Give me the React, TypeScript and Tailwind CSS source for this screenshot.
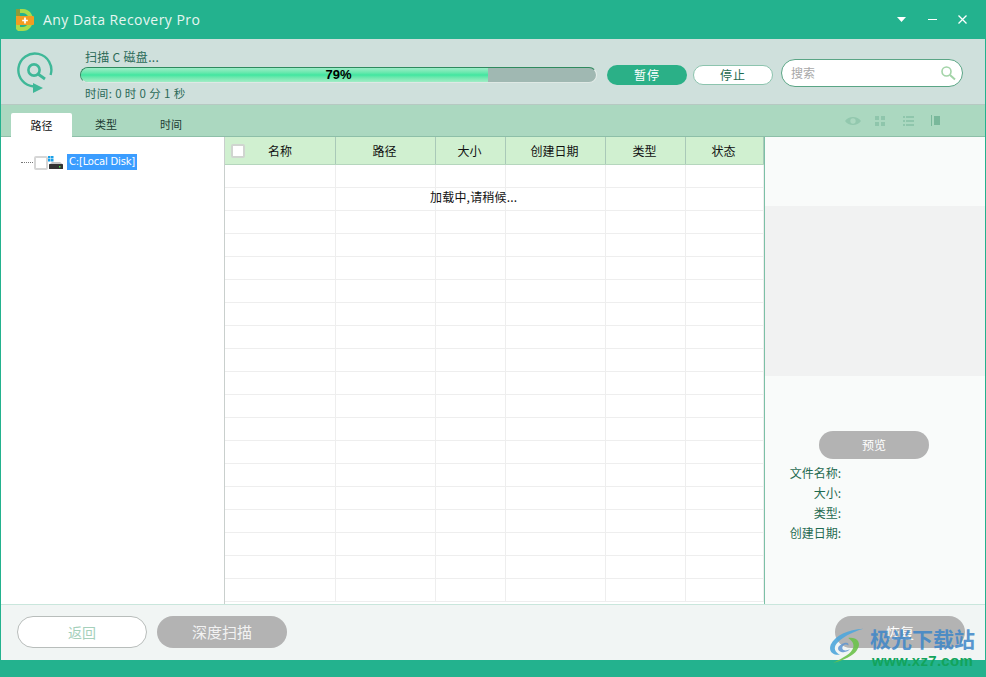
import React from "react";

const font = { fontFamily: '"Noto Sans CJK SC", "Liberation Sans", sans-serif' };
const cols = [
  { w: "w-[111px]", t: "名称", check: true },
  { w: "w-[100px]", t: "路径" },
  { w: "w-[70px]", t: "大小" },
  { w: "w-[100px]", t: "创建日期" },
  { w: "w-[80px]", t: "类型" },
  { w: "w-[78px]", t: "状态" },
];
const rows = Array.from({ length: 19 });

function Logo() {
  return (
    <svg width="20" height="24" viewBox="0 0 20 24" className="shrink-0">
      <path d="M1 1 H8 C14 1 18 6 18 12 C18 18 14 23 8 23 H3 L1 21 Z M5 5 V19 H8 C11 19 14 16 14 12 C14 8 11 5 8 5 Z" fill="#a9dc4c" fillRule="evenodd" />
      <path d="M1 1 H5 V8 H1 Z" fill="#8a9c3a" />
      <rect x="1" y="8" width="18" height="9" rx="1" fill="#f39c21" />
      <path d="M10 9.6 V15.4 M7.2 12.5 H12.8" stroke="#fff" strokeWidth="1.7" />
    </svg>
  );
}

function ScanIcon() {
  return (
    <svg width="38" height="41" viewBox="0 0 38 41" className="shrink-0">
      <path d="M33.6 23 A16.5 16.5 0 1 0 17 34.5" fill="none" stroke="#3fb898" strokeWidth="2.4" />
      <path d="M16 31 L26 36 L16 41 Z" fill="#3fb898" />
      <circle cx="17" cy="18" r="5.6" fill="none" stroke="#3fb898" strokeWidth="2.6" />
      <path d="M21 22 L28 27" stroke="#3fb898" strokeWidth="2.8" />
    </svg>
  );
}

function Toolbar() {
  return (
    <div className="flex items-center mr-[45px]">
      <svg width="16" height="12" viewBox="0 0 18 12"><path d="M0 6 C4 0 14 0 18 6 C14 12 4 12 0 6 Z M9 3 A3 3 0 1 0 9 9 A3 3 0 1 0 9 3 Z" fill="#92c8ae" fillRule="evenodd" /></svg>
      <svg width="10" height="10" viewBox="0 0 10 10" className="ml-[14px]" fill="#8fc6ac"><rect width="4" height="4" /><rect x="6" width="4" height="4" /><rect y="6" width="4" height="4" /><rect x="6" y="6" width="4" height="4" /></svg>
      <svg width="11" height="10" viewBox="0 0 11 10" className="ml-[18px]" fill="#8fc6ac"><rect width="2" height="2" /><rect x="3" width="8" height="2" /><rect y="4" width="2" height="2" /><rect x="3" y="4" width="8" height="2" /><rect y="8" width="2" height="2" /><rect x="3" y="8" width="8" height="2" /></svg>
      <svg width="9" height="11" viewBox="0 0 9 11" className="ml-[17px]" fill="#79b89b"><rect width="1" height="11" /><rect x="3" y="1" width="6" height="9" /></svg>
    </div>
  );
}

export default function App() {
  return (
    <div className="w-[986px] h-[677px] flex flex-col overflow-hidden bg-[#23b28e] relative" style={font}>
      {/* title bar */}
      <div className="h-[39px] shrink-0 flex items-center pl-[15px] pr-[19px] text-white">
        <Logo />
        <span className="ml-[8px] text-[14px] tracking-[0.45px] text-[#e6f6f1]" style={{ fontFamily: '"Open Sans", sans-serif' }}>Any Data Recovery Pro</span>
        <div className="ml-auto flex items-center">
          <svg width="9" height="5" viewBox="0 0 9 5" className="mr-[22px]"><path d="M0 0 H9 L4.5 5 Z" fill="#fff" /></svg>
          <svg width="9" height="2" viewBox="0 0 9 2" className="mr-[21px]"><rect width="9" height="1" fill="#fff" /></svg>
          <svg width="9" height="9" viewBox="0 0 9 9"><path d="M0.5 0.5 L8.5 8.5 M8.5 0.5 L0.5 8.5" stroke="#fff" strokeWidth="1.3" /></svg>
        </div>
      </div>

      {/* scan panel */}
      <div className="h-[66px] shrink-0 mx-px bg-[#cfe0dc] flex items-start border-b border-[#b6c9c2]">
        <div className="ml-[16px] w-[63px] mt-[13px]"><ScanIcon /></div>
        <div className="mt-[10px] w-[517px] flex flex-col text-[#2b6a58] text-[12px] leading-[16px]">
          <div className="ml-[5px] h-[17px] tracking-[0.3px]">扫描 C 磁盘...</div>
          <div className="h-[16px] rounded-[8px] border border-[#2f8a5e] border-r-[#e8efec] border-b-[#dfe9e5] bg-[#a0b8b2] overflow-hidden relative mt-px">
            <div className="h-full w-[79%] bg-gradient-to-b from-[#9cecc8] via-[#3fe6a0] to-[#a0ecc6]" />
            <div className="absolute inset-0 flex items-center justify-center text-[13px] font-bold text-black" style={{ fontFamily: '"Liberation Sans", sans-serif' }}>79%</div>
          </div>
          <div className="ml-[5px] mt-[2px] h-[16px] text-[11.5px] tracking-[0.35px]">时间: 0 时 0 分 1 秒</div>
        </div>
        <div className="ml-[10px] mt-[26px] w-[80px] h-[20px] rounded-full bg-[#2bb087] text-white text-[12px] flex items-center justify-center tracking-[1px]">暂停</div>
        <div className="ml-[6px] mt-[26px] w-[80px] h-[20px] rounded-full bg-white border border-[#8cc4ae] text-[#1f6a50] text-[12px] flex items-center justify-center tracking-[1px]">停止</div>
        <div className="ml-[8px] mt-[20px] w-[182px] h-[28px] rounded-full bg-white border border-[#5aa585] flex items-center pl-[9px] pr-[6px]">
          <span className="text-[12px] text-[#a8a8a8]">搜索</span>
          <svg width="16" height="16" viewBox="0 0 16 16" className="ml-auto"><circle cx="6.5" cy="6.5" r="4.5" fill="none" stroke="#a3d4a8" strokeWidth="1.6" /><path d="M10 10 L15 14.5" stroke="#a3d4a8" strokeWidth="2" /></svg>
        </div>
      </div>

      {/* tabs */}
      <div className="h-[32px] shrink-0 mx-px bg-[#abd8c0] flex items-end justify-between border-b border-[#8dbfa8]">
        <div className="flex items-end pl-[10px] text-[11px] text-[#1c3a30]">
          <div className="w-[61px] h-[24px] -mb-px bg-white rounded-t-[2px] flex items-center justify-center text-[#111]">路径</div>
          <div className="w-[68px] h-[23px] flex items-center justify-center">类型</div>
          <div className="w-[62px] h-[23px] flex items-center justify-center">时间</div>
        </div>
        <div className="self-center"><Toolbar /></div>
      </div>

      {/* content */}
      <div className="h-[467px] shrink-0 mx-px bg-white flex">
        <div className="w-[224px] shrink-0 pt-[17px] pl-[20px] flex items-start border-r border-[#c9cfcd]">
          <div className="flex items-start h-[16px]">
            <div className="w-[12px] mt-[8px] border-t border-dotted border-[#777] mr-px" />
            <div className="mt-[2px] w-[14px] h-[14px] rounded-[2px] bg-white border-2 border-[#d6d6d6]" />
            <svg width="15" height="14" viewBox="0 0 15 14" className="shrink-0 mt-[2px]">
              <rect x="0" y="0" width="2.5" height="2.5" fill="#1aa0e8" /><rect x="3" y="0" width="2.5" height="2.5" fill="#1aa0e8" /><rect x="0" y="3" width="2.5" height="2.5" fill="#1aa0e8" /><rect x="3" y="3" width="2.5" height="2.5" fill="#1aa0e8" />
              <path d="M2 8 L4 6 H12 L14.5 8 Z" fill="#c6c6c6" /><rect x="1" y="8" width="14" height="5" rx="0.5" fill="#333" /><rect x="11" y="10" width="1.5" height="1.5" fill="#4ade4a" />
            </svg>
            <div className="ml-[4px] h-[16px] px-[2px] bg-[#3b9dff] text-white text-[10px] leading-[15px] whitespace-nowrap" style={{ fontFamily: '"DejaVu Sans", sans-serif', letterSpacing: "-0.2px" }}>C:[Local Disk]</div>
          </div>
        </div>

        <div className="w-[539px] shrink-0 flex flex-col overflow-hidden relative">
          <div className="h-[28px] shrink-0 flex bg-[#d0f0d0] border-b border-[#b5d6bd] text-[12px] text-[#111]">
            {cols.map((c) => (
              <div key={c.t} className={`${c.w} shrink-0 flex items-center justify-center border-r border-[#a9c9b8] relative ${c.check ? "" : "pr-[2px]"}`}>
                {c.check && <div className="absolute left-[6px] top-[7px] w-[14px] h-[14px] rounded-[2px] bg-white border-2 border-[#d0d5d0]" />}
                {c.t}
              </div>
            ))}
          </div>
          {rows.map((_, i) => (
            <div key={i} className="h-[23px] shrink-0 flex border-b border-[#eeeeee]">
              {cols.map((c) => (
                <div key={c.t} className={`${c.w} shrink-0 border-r border-[#eeeeee]`} />
              ))}
            </div>
          ))}
          <div className="absolute left-[205px] top-[52px] text-[12px] leading-[16px] text-[#111] whitespace-nowrap tracking-[0.2px]">加载中,请稍候...</div>
        </div>

        <div className="flex-1 border-l border-[#7cc0a6] bg-[#f9fbfa] flex flex-col">
          <div className="h-[69px] shrink-0" />
          <div className="h-[170px] shrink-0 bg-[#f1f2f2]" />
          <div className="mt-[55px] ml-[54px] w-[110px] h-[28px] rounded-full bg-[#b3b3b3] text-white text-[12px] flex items-center justify-center">预览</div>
          <div className="mt-[4px] w-[76px] flex flex-col text-right text-[12px] leading-[20px] text-[#1f6a50]">
            <div>文件名称:</div>
            <div>大小:</div>
            <div>类型:</div>
            <div>创建日期:</div>
          </div>
        </div>
      </div>

      {/* footer */}
      <div className="h-[56px] shrink-0 mx-px bg-[#f1f5f4] border-t border-[#c9e6dc] flex items-start pt-[11px] pl-[16px] pr-[20px]">
        <div className="w-[130px] h-[32px] rounded-full bg-white border border-[#b8bdbb] text-[#a5d0bb] text-[14px] flex items-center justify-center">返回</div>
        <div className="ml-[10px] w-[130px] h-[32px] rounded-full bg-[#b3b3b3] text-[#f2f2f2] text-[15px] flex items-center justify-center">深度扫描</div>
        <div className="ml-auto w-[130px] h-[32px] rounded-full bg-[#b3b3b3] text-white text-[14px] flex items-center justify-center">恢复</div>
      </div>
      <div className="flex-1" />

      {/* watermark */}
      <div className="absolute left-[825px] top-[622px] w-[155px] h-[50px] pointer-events-none">
        <svg width="46" height="42" viewBox="0 0 52 50" className="absolute left-[2px] top-[5px]">
          <path d="M42 2 C24 3 8 10 3 21 C0 29 6 34 14 33 C8 30 6 25 10 20 C15 13 28 6 42 2 Z" fill="#4ea6dc" opacity="0.9" />
          <path d="M12 24 C15 19 26 16 24 22 C21 19 16 22 17 26 C18 29 24 28 26 26 C23 32 10 31 12 24 Z" fill="#5d94d0" opacity="0.85" />
          <path d="M24 13 C36 12 40 20 34 28 C30 34 18 40 6 43 C18 36 28 32 30 24 C31 19 28 16 24 13 Z" fill="#6cc24a" opacity="0.9" />
        </svg>
        <div className="absolute left-[45px] top-[1px] text-[21px] leading-[30px] font-bold text-[#3d86c8] opacity-85 whitespace-nowrap">极光下载站</div>
        <div className="absolute left-[47px] top-[30px] text-[15px] leading-[18px] font-bold text-[#12a45c] whitespace-nowrap tracking-[0.3px]" style={{ fontFamily: '"Liberation Sans", sans-serif' }}>www.xz7.com</div>
      </div>
    </div>
  );
}
